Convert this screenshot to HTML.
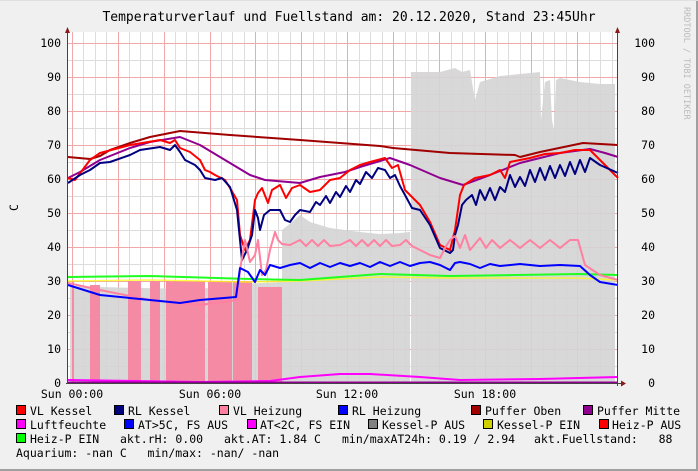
<!DOCTYPE html>
<html><head><meta charset="utf-8"><style>
html,body{margin:0;padding:0;background:#f0f0f0}
svg{display:block}
text{font-family:"DejaVu Sans Mono","Liberation Mono",monospace;font-size:11.5px;fill:#000;white-space:pre}
</style></head><body>
<svg width="698" height="471" viewBox="0 0 698 471" xmlns="http://www.w3.org/2000/svg" xml:space="preserve">
<rect x="0" y="0" width="698" height="471" fill="#f0f0f0"/>
<rect x="696" y="0" width="2" height="471" fill="#a0a0a0"/>
<rect x="0" y="469" width="698" height="2" fill="#a0a0a0"/>
<rect x="0" y="0" width="698" height="1" fill="#e0e0e0"/>
<text x="349" y="21" text-anchor="middle" style="font-size:13px">Temperaturverlauf und Fuellstand am: 20.12.2020, Stand 23:45Uhr</text>
<text x="0" y="0" transform="translate(684,7) rotate(90)" style="font-size:8.5px;fill:#bbb">RRDTOOL / TOBI OETIKER</text>
<text x="0" y="0" transform="translate(18,211) rotate(-90)">C</text>
<rect x="68" y="32" width="549" height="351" fill="#fff"/>
<g stroke="#dcdcdc" stroke-width="1">
<path d="M68 60.5H617M68 94.5H617M68 128.5H617M68 162.5H617M68 196.5H617M68 230.5H617M68 264.5H617M68 298.5H617M68 332.5H617M68 366.5H617"/>
<path d="M83.5 32V383M95.5 32V383M106.5 32V383M129.5 32V383M140.5 32V383M152.5 32V383M175.5 32V383M186.5 32V383M198.5 32V383M221.5 32V383M232.5 32V383M244.5 32V383M267.5 32V383M278.5 32V383M290.5 32V383M313.5 32V383M324.5 32V383M336.5 32V383M359.5 32V383M370.5 32V383M382.5 32V383M405.5 32V383M416.5 32V383M428.5 32V383M451.5 32V383M462.5 32V383M474.5 32V383M497.5 32V383M508.5 32V383M520.5 32V383M543.5 32V383M554.5 32V383M566.5 32V383M589.5 32V383M600.5 32V383M612.5 32V383"/>
</g>
<g stroke="#f0a8a8" stroke-width="1">
<path d="M68 43.5H617M68 77.5H617M68 111.5H617M68 145.5H617M68 179.5H617M68 213.5H617M68 247.5H617M68 281.5H617M68 315.5H617M68 349.5H617"/>
<path d="M72.5 32V383M118.5 32V383M164.5 32V383M210.5 32V383M255.5 32V383M301.5 32V383M347.5 32V383M393.5 32V383M439.5 32V383M485.5 32V383M531.5 32V383M577.5 32V383"/>
</g>
<g fill="#d4d4d4" fill-opacity="0.9">
<path d="M70 383V286L100 287L140 288L200 289L240 284L282 282V383Z"/>
<path d="M282 383V230L292 222L300 215L310 222L330 228L360 232L380 234L400 233L410 232V383Z"/>
<path d="M411 383V72L440 72L455 68L462 72L470 70L475 100L480 82L500 76L520 74L540 72L541 120L545 82L550 80L552 120L554 130L556 80L560 78L580 82L600 84L615 84V383Z"/>
</g>
<g fill="#f58aa5">
<rect x="72" y="281" width="2" height="102"/>
<rect x="90" y="285" width="10" height="98"/>
<rect x="128" y="281" width="13" height="102"/>
<rect x="150" y="281" width="10" height="102"/>
<rect x="166" y="281" width="39" height="102"/>
<rect x="208" y="281" width="24" height="102"/>
<rect x="233" y="281" width="19" height="102"/>
<rect x="258" y="287" width="24" height="96"/>
</g>
<g fill="none" stroke-linejoin="round" stroke-width="2">
<polyline stroke="#ffff00" stroke-opacity="0.7" stroke-width="1.5" points="68,281 150,280 250,282 300,281 380,277 450,278 578,278 618,280"/>
<polyline stroke="#20ff20" points="68,277 150,276 250,279 300,280 380,274 450,276 578,274 618,275"/>
<polyline stroke="#a00000" points="68,157 90,159 100,156 110,150 130,143 150,137 180,131 230,135 300,140 380,146 393,148 450,153 515,155 520,157 540,152 583,143 618,145"/>
<polyline stroke="#900090" points="68,178 80,172 100,160 130,148 150,142 180,137 200,145 230,163 250,175 265,180 300,183 320,177 345,172 360,167 390,158 410,165 440,178 463,185 490,175 520,163 560,153 590,149 605,153 618,157"/>
<polyline stroke="#ff0000" points="68,178 75,180 90,160 100,153 130,145 160,140 170,143 175,140 180,148 190,152 200,160 205,170 210,172 215,175 225,180 230,188 237,200 240,235 245,250 250,240 255,200 258,193 262,188 268,203 272,190 280,185 286,198 292,188 300,185 310,192 320,190 330,180 340,178 350,170 360,165 370,162 385,158 392,168 398,165 405,190 412,197 420,205 430,222 440,245 450,250 455,230 460,195 464,185 475,178 490,175 500,170 505,178 510,162 520,160 530,158 545,154 560,153 575,150 590,150 600,160 618,178"/>
<polyline stroke="#000080" points="68,183 80,175 90,170 100,163 110,162 130,155 140,150 160,147 170,150 175,145 180,152 185,160 195,165 200,170 205,178 215,180 222,178 230,187 237,210 242,260 247,250 252,235 255,210 258,218 260,230 264,215 270,210 280,210 285,220 290,222 295,215 300,210 310,212 316,202 320,205 326,196 330,203 336,192 340,197 346,186 350,192 356,180 360,184 366,172 372,178 378,168 385,170 390,178 395,175 400,186 405,195 412,208 420,210 430,225 440,248 450,253 453,250 455,235 458,225 462,205 466,200 472,195 476,205 480,190 485,200 490,188 495,200 500,187 505,192 510,175 515,187 520,177 525,186 530,170 535,182 540,168 545,180 550,166 555,178 560,165 565,176 570,162 575,174 580,160 585,172 590,158 600,165 618,173"/>
<polyline stroke="#ff80a0" points="68,283 100,290 150,300 200,305 237,300 240,270 245,240 250,262 255,255 258,240 262,275 266,270 270,250 275,232 278,240 282,244 290,245 300,240 306,246 312,240 318,246 324,240 330,246 340,245 350,240 356,246 362,240 368,246 374,240 380,246 386,240 392,246 400,245 406,240 412,246 420,250 430,255 440,258 445,248 450,240 455,236 460,248 465,235 470,250 480,238 486,248 492,240 500,248 510,240 520,248 530,240 540,248 550,240 560,248 570,240 578,240 585,265 600,275 618,280"/>
<polyline stroke="#0000ff" points="68,285 100,295 150,300 180,303 200,300 236,297 240,268 248,272 255,282 260,270 265,275 270,265 280,268 290,265 300,263 310,268 320,263 330,267 340,263 350,266 360,263 370,267 380,262 390,266 400,262 410,266 420,263 430,262 440,265 450,270 455,263 460,262 470,264 480,268 490,264 500,266 520,264 540,266 560,265 580,266 590,275 600,282 618,285"/>
<polyline stroke="#ff00ff" points="68,380 200,382 270,381 300,377 340,374 370,374 420,377 460,380 540,379 618,377"/>
</g>
<path d="M68 382.5H617" stroke="#900090" stroke-width="2"/>
<path d="M67.5 30V384M617.5 30V386M66 383.5H622" stroke="#444" stroke-width="1"/>
<path d="M65 33L67.5 27L70 33Z M615 33L617.5 27L620 33Z M621 380.5L626 383.5L621 386.5Z" fill="#8b1a1a"/>
<g text-anchor="end">
<text x="61" y="47">100</text><text x="61" y="81">90</text><text x="61" y="115">80</text><text x="61" y="149">70</text><text x="61" y="183">60</text><text x="61" y="217">50</text><text x="61" y="251">40</text><text x="61" y="285">30</text><text x="61" y="319">20</text><text x="61" y="353">10</text><text x="61" y="387">0</text>
<text x="655" y="47">100</text><text x="655" y="81">90</text><text x="655" y="115">80</text><text x="655" y="149">70</text><text x="655" y="183">60</text><text x="655" y="217">50</text><text x="655" y="251">40</text><text x="655" y="285">30</text><text x="655" y="319">20</text><text x="655" y="353">10</text><text x="655" y="387">0</text>
</g>
<g text-anchor="middle">
<text x="72" y="398">Sun 00:00</text><text x="210" y="398">Sun 06:00</text><text x="347" y="398">Sun 12:00</text><text x="485" y="398">Sun 18:00</text>
</g>
<g stroke="#000" stroke-width="1">
<rect x="16.5" y="405.5" width="9" height="9" fill="#ff0000"/>
<rect x="114.5" y="405.5" width="9" height="9" fill="#000080"/>
<rect x="219.5" y="405.5" width="9" height="9" fill="#ff80a0"/>
<rect x="338.5" y="405.5" width="9" height="9" fill="#0000ff"/>
<rect x="471.5" y="405.5" width="9" height="9" fill="#a00000"/>
<rect x="583.5" y="405.5" width="9" height="9" fill="#900090"/>
<rect x="16.5" y="419.5" width="9" height="9" fill="#ff00ff"/>
<rect x="124.5" y="419.5" width="9" height="9" fill="#0000ff"/>
<rect x="247.5" y="419.5" width="9" height="9" fill="#ff00ff"/>
<rect x="368.5" y="419.5" width="9" height="9" fill="#808080"/>
<rect x="483.5" y="419.5" width="9" height="9" fill="#d0d000"/>
<rect x="599.5" y="419.5" width="9" height="9" fill="#ff0000"/>
<rect x="16.5" y="433.5" width="9" height="9" fill="#00ff00"/>
</g>
<text x="30" y="415">VL Kessel</text>
<text x="128" y="415">RL Kessel</text>
<text x="233" y="415">VL Heizung</text>
<text x="352" y="415">RL Heizung</text>
<text x="485" y="415">Puffer Oben</text>
<text x="597" y="415">Puffer Mitte</text>
<text x="30" y="429">Luftfeuchte</text>
<text x="138" y="429">AT&gt;5C, FS AUS</text>
<text x="260" y="429">AT&lt;2C, FS EIN</text>
<text x="382" y="429">Kessel-P AUS</text>
<text x="497" y="429">Kessel-P EIN</text>
<text x="612" y="429">Heiz-P AUS</text>
<text x="30" y="443">Heiz-P EIN</text>
<text x="120" y="443">akt.rH: 0.00</text>
<text x="224" y="443">akt.AT: 1.84 C</text>
<text x="342" y="443">min/maxAT24h: 0.19 / 2.94</text>
<text x="534" y="443">akt.Fuellstand:   88</text>
<text x="16" y="457">Aquarium: -nan C   min/max: -nan/ -nan</text>
</svg>
</body></html>
